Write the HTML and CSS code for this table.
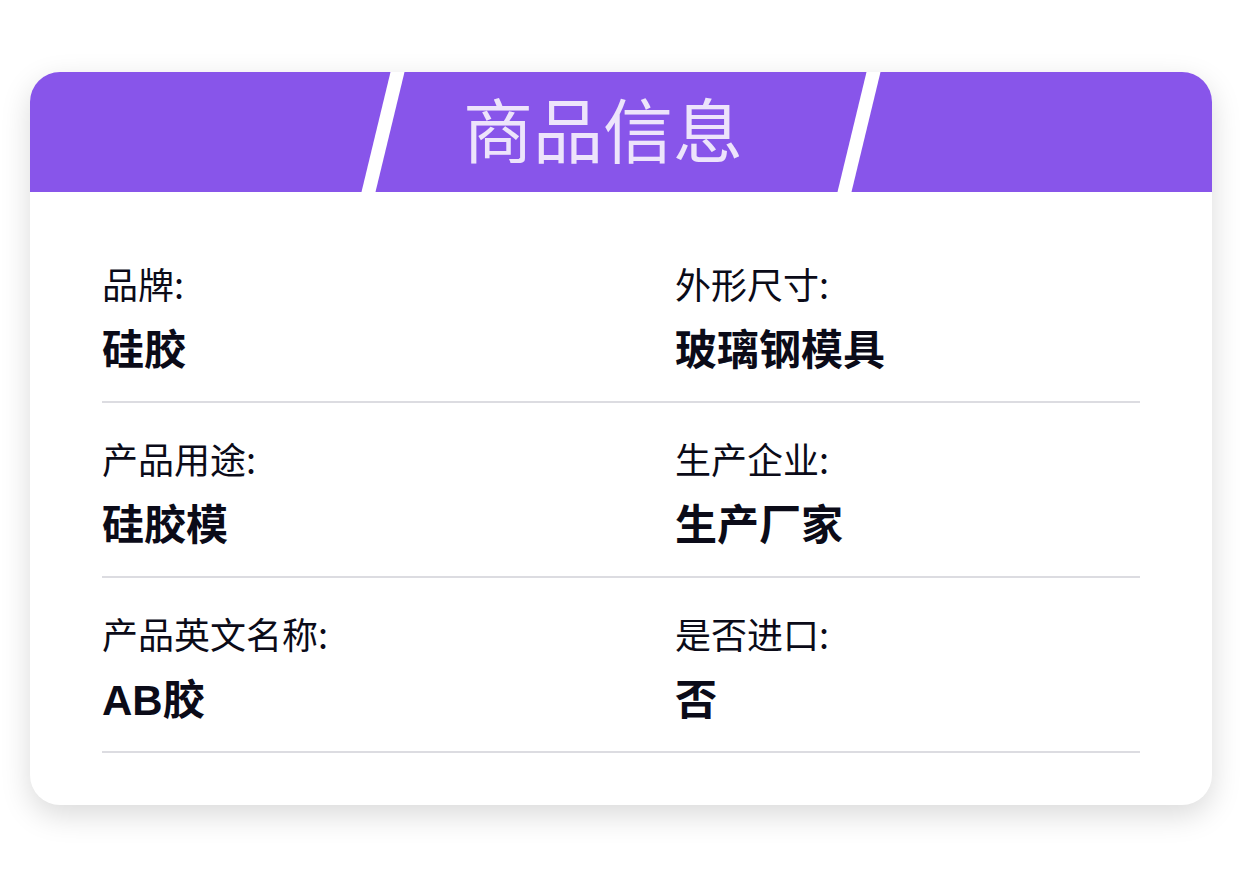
FILE: index.html
```html
<!DOCTYPE html>
<html lang="zh-CN">
<head>
<meta charset="utf-8">
<title>商品信息</title>
<link rel="stylesheet" href="styles.css">
</head>
<body>
<div class="page">
  <section class="card">
    <header class="card-head">
      <h1 class="card-title">商品信息</h1>
    </header>
    <div class="card-body">
      <div class="row">
        <div class="cell"><div class="label">品牌:</div><div class="value">硅胶</div></div>
        <div class="cell"><div class="label">外形尺寸:</div><div class="value">玻璃钢模具</div></div>
      </div>
      <div class="row">
        <div class="cell"><div class="label">产品用途:</div><div class="value">硅胶模</div></div>
        <div class="cell"><div class="label">生产企业:</div><div class="value">生产厂家</div></div>
      </div>
      <div class="row">
        <div class="cell"><div class="label">产品英文名称:</div><div class="value">AB胶</div></div>
        <div class="cell"><div class="label">是否进口:</div><div class="value">否</div></div>
      </div>
    </div>
  </section>
</div>
</body>
</html>
```

FILE: styles.css
```css
*, *::before, *::after { box-sizing: border-box; margin: 0; padding: 0; }
html, body { background: #ffffff; }
body {
  font-family: "Noto Sans CJK SC", "Noto Sans", sans-serif;
  color: #0b0b18;
}
.page {
  min-height: 877px;
  padding: 72px 30px 72px 30px;
}
.card {
  width: 1182px;
  height: 733px;
  background: #ffffff;
  border-radius: 30px;
  overflow: hidden;
  box-shadow: 0 10px 30px rgba(0, 0, 0, 0.15);
}
.card-head {
  position: relative;
  height: 120px;
  background: #8855ea;
  display: flex;
  align-items: center;
  justify-content: center;
  overflow: hidden;
}
.card-head::before {
  content: "";
  position: absolute;
  top: -10px;
  bottom: -10px;
  left: 50%;
  width: 490px;
  margin-left: -245px;
  border-left: 14px solid #ffffff;
  border-right: 14px solid #ffffff;
  transform: skewX(-13.6deg);
}
.card-title {
  position: relative;
  font-size: 70px;
  font-weight: 400;
  line-height: 1;
  color: #ede4fb;
  margin-top: -9px;
  margin-right: 36px;
}
.card-body {
  padding: 36px 72px 51px 72px;
}
.row {
  display: grid;
  grid-template-columns: 573px 1fr;
  padding: 37px 0 29px 0;
  border-bottom: 2px solid #dcdce1;
}
.cell {
  display: flex;
  flex-direction: column;
  gap: 29px;
}
.label {
  font-size: 36px;
  line-height: 36px;
  font-weight: 400;
  color: #0b0b18;
}
.value {
  font-family: "Liberation Sans", "Noto Sans CJK SC", sans-serif;
  font-size: 42px;
  line-height: 42px;
  font-weight: 700;
  color: #0b0b18;
}
```
